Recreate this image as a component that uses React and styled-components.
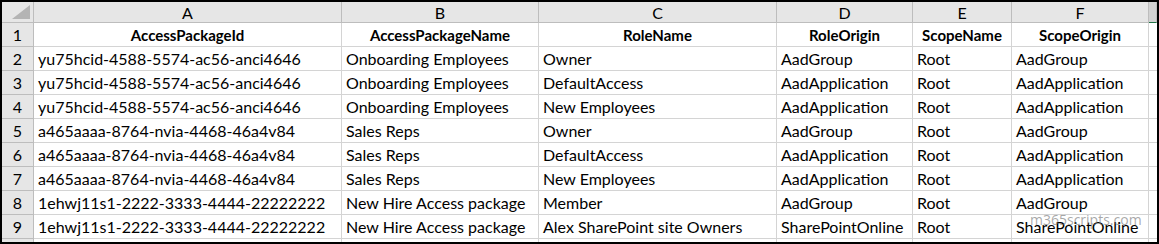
import React from 'react';
import styled, { createGlobalStyle } from 'styled-components';

const GlobalStyle = createGlobalStyle`
  body {
    margin: 0;
    background: #fff;
  }
`;

const COLS = [32, 308, 197, 238, 136, 99, 137, 8];

const Frame = styled.div`
  position: relative;
  width: 1159px;
  height: 244px;
  box-sizing: border-box;
  border: 2px solid #000;
  overflow: hidden;
  font-family: Lato, "Liberation Sans", sans-serif;
  font-size: 16px;
  color: #000;
`;

const Grid = styled.div`
  display: grid;
  grid-template-columns: ${COLS.map(c => `${c}px`).join(' ')};
  grid-auto-rows: 24px;
  grid-template-rows: 21px;
`;

const Cell = styled.div`
  box-sizing: border-box;
  border-right: 1px solid #d4d4d4;
  border-bottom: 1px solid #d4d4d4;
  padding: 0 4px;
  display: flex;
  align-items: center;
  justify-content: ${p => (p.$bold ? 'center' : 'flex-start')};
  font-weight: ${p => (p.$bold ? 700 : 400)};
  font-size: ${p => (p.$bold ? '15px' : '16px')};
  white-space: nowrap;
  overflow: hidden;
`;

const HeadCell = styled.div`
  box-sizing: border-box;
  background: ${p => (p.$edge ? '#d2d2d2' : '#e6e6e6')};
  border-right: 1px solid #bdbdbd;
  border-bottom: 1px solid ${p => (p.$edge ? '#217346' : '#bdbdbd')};
  display: flex;
  align-items: center;
  justify-content: center;
  font-size: 16px;
`;

const RowNum = styled(HeadCell)`
  border-bottom-color: #bdbdbd;
`;

const Corner = styled(HeadCell)`
  position: relative;
  svg {
    position: absolute;
    right: 3px;
    bottom: 3px;
  }
`;

// faint site stamp laid over the last rows
const Watermark = styled.div`
  position: absolute;
  left: 1028px;
  top: 210px;
  font-family: "Open Sans", sans-serif;
  font-size: 14px;
  line-height: 16px;
  color: rgba(110, 110, 110, 0.6);
  pointer-events: none;
`;

const letters = ['A', 'B', 'C', 'D', 'E', 'F'];
const headers = ['AccessPackageId', 'AccessPackageName', 'RoleName', 'RoleOrigin', 'ScopeName', 'ScopeOrigin'];

const rows = [
  ['yu75hcid-4588-5574-ac56-anci4646', 'Onboarding Employees', 'Owner', 'AadGroup', 'Root', 'AadGroup'],
  ['yu75hcid-4588-5574-ac56-anci4646', 'Onboarding Employees', 'DefaultAccess', 'AadApplication', 'Root', 'AadApplication'],
  ['yu75hcid-4588-5574-ac56-anci4646', 'Onboarding Employees', 'New Employees', 'AadApplication', 'Root', 'AadApplication'],
  ['a465aaaa-8764-nvia-4468-46a4v84', 'Sales Reps', 'Owner', 'AadGroup', 'Root', 'AadGroup'],
  ['a465aaaa-8764-nvia-4468-46a4v84', 'Sales Reps', 'DefaultAccess', 'AadApplication', 'Root', 'AadApplication'],
  ['a465aaaa-8764-nvia-4468-46a4v84', 'Sales Reps', 'New Employees', 'AadApplication', 'Root', 'AadApplication'],
  ['1ehwj11s1-2222-3333-4444-22222222', 'New Hire Access package', 'Member', 'AadGroup', 'Root', 'AadGroup'],
  ['1ehwj11s1-2222-3333-4444-22222222', 'New Hire Access package', 'Alex SharePoint site Owners', 'SharePointOnline', 'Root', 'SharePointOnline'],
  ['', '', '', '', '', ''],
];

export default function App() {
  return (
    <>
      <GlobalStyle />
      <Frame>
        <Grid>
          <Corner>
            <svg width="18" height="14" viewBox="0 0 18 14">
              <polygon points="18,0 18,14 0,14" fill="#b4b4b4" />
            </svg>
          </Corner>
          {letters.map(l => (
            <HeadCell key={l}>{l}</HeadCell>
          ))}
          <HeadCell $edge />

          <RowNum>1</RowNum>
          {headers.map(h => (
            <Cell key={h} $bold>{h}</Cell>
          ))}
          <Cell />

          {rows.map((r, i) => (
            <React.Fragment key={i}>
              <RowNum>{i < 8 ? i + 2 : ''}</RowNum>
              {r.map((v, j) => (
                <Cell key={j}>{v}</Cell>
              ))}
              <Cell />
            </React.Fragment>
          ))}
        </Grid>
        <Watermark>m365scripts.com</Watermark>
      </Frame>
    </>
  );
}
